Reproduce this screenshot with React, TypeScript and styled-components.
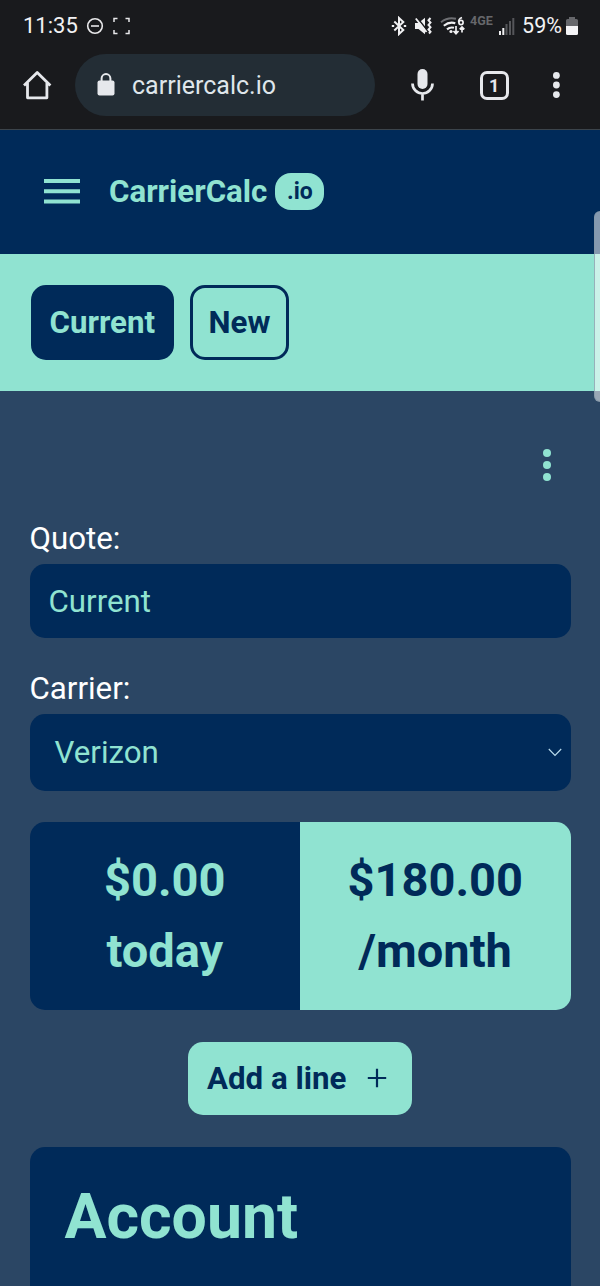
import React from "react";
import styled, { createGlobalStyle } from "styled-components";

const navy = "#002a59";
const mint = "#90e3d1";
const slate = "#2b4664";
const chrome = "#191a1d";
const light = "#e6e8ec";

const GlobalStyle = createGlobalStyle`
  * { box-sizing: border-box; }
  html, body { margin: 0; padding: 0; background: ${slate}; }
  body { font-family: Roboto, sans-serif; font-size: 31.25px; }
  button, input { font: inherit; margin: 0; border: 0; outline: 0; }
  svg { display: block; flex: none; }
`;

const Screen = styled.div`
  position: relative;
  width: 600px;
  height: 1286px;
  overflow: hidden;
  display: flex;
  flex-direction: column;
  background: ${slate};
`;

const BrowserChrome = styled.div`
  flex: none;
  height: 130px;
  background: ${chrome};
  border-bottom: 1px solid #3c444b;
`;

const StatusBar = styled.div`
  display: flex;
  align-items: center;
  justify-content: space-between;
  height: 50px;
  padding: 1px 22px 0 23px;
  color: #f2f2f4;
`;

const StatusGroup = styled.div<{ $gap: number }>`
  display: flex;
  align-items: center;
  gap: ${(p) => p.$gap}px;
`;

const StatusText = styled.span<{ $size?: number }>`
  font-size: ${(p) => p.$size ?? 22}px;
  line-height: 26px;
`;

const AddressRow = styled.div`
  display: flex;
  align-items: center;
  height: 70px;
  padding: 0 36px 0 22px;
`;

const AddressPill = styled.div`
  display: flex;
  align-items: center;
  width: 300px;
  height: 62px;
  margin-left: 23px;
  padding-left: 22px;
  border-radius: 31px;
  background: #232d35;
  color: #dfe6eb;
  font-size: 25px;
  gap: 17px;
`;

const BrowserActions = styled.div`
  display: flex;
  align-items: center;
  justify-content: space-between;
  width: 149px;
  margin-left: 36px;
`;

const TabCount = styled.div`
  display: flex;
  align-items: center;
  justify-content: center;
  width: 29px;
  height: 29px;
  margin-left: 1px;
  border: 3px solid ${light};
  border-radius: 7px;
  color: ${light};
  font-size: 18px;
  font-weight: 700;
  line-height: 23px;
`;

const SiteHeader = styled.header`
  flex: none;
  display: flex;
  align-items: center;
  height: 124px;
  padding: 0 0 1px 44px;
  background: ${navy};
  color: ${mint};
`;

const Brand = styled.div`
  display: flex;
  align-items: center;
  gap: 8px;
  margin-left: 29px;
  font-weight: 700;
`;

const BrandSuffix = styled.span`
  display: flex;
  align-items: center;
  justify-content: center;
  width: 49px;
  height: 37px;
  border-radius: 16px;
  background: ${mint};
  color: ${navy};
  font-size: 23px;
  line-height: 37px;
`;

const QuoteTabs = styled.nav`
  flex: none;
  display: flex;
  gap: 16px;
  height: 137px;
  padding: 31px 30.5px 0;
  background: ${mint};
`;

const QuoteTab = styled.button<{ $active?: boolean; $width: number }>`
  width: ${(p) => p.$width}px;
  height: 74.5px;
  padding: 0;
  border: 3px solid ${navy};
  border-radius: 15px;
  background: ${(p) => (p.$active ? navy : "transparent")};
  color: ${(p) => (p.$active ? mint : navy)};
  font-weight: 700;
`;

const Main = styled.main`
  flex: 1;
  display: flex;
  flex-direction: column;
  padding: 58px 29.5px 0;
`;

const MenuRow = styled.div`
  display: flex;
  justify-content: flex-end;
  padding-right: 20px;
  margin-bottom: 35px;
`;

const Label = styled.label`
  height: 48px;
  line-height: 46px;
  color: #fff;
`;

const TextField = styled.input`
  width: 100%;
  height: 74px;
  margin-bottom: 28px;
  padding: 0 19px;
  border-radius: 15px;
  background: ${navy};
  color: ${mint};
`;

const SelectField = styled.button`
  flex: none;
  display: flex;
  align-items: center;
  justify-content: space-between;
  width: 100%;
  height: 77px;
  padding: 0 8.5px 0 25px;
  border-radius: 15px;
  background: ${navy};
  color: ${mint};
`;

const Totals = styled.section`
  flex: none;
  display: flex;
  height: 187.5px;
  margin-top: 31px;
  border-radius: 15px;
  overflow: hidden;
`;

const Total = styled.div<{ $inverse?: boolean }>`
  flex: 1;
  padding-top: 23px;
  background: ${(p) => (p.$inverse ? mint : navy)};
  color: ${(p) => (p.$inverse ? navy : mint)};
  font-size: 47px;
  font-weight: 700;
  line-height: 70.5px;
  text-align: center;
`;

const AddLine = styled.button`
  flex: none;
  align-self: center;
  display: flex;
  align-items: center;
  gap: 21px;
  width: 224px;
  height: 73px;
  margin-top: 32px;
  padding: 0 0 0 19px;
  border-radius: 15px;
  background: ${mint};
  color: ${navy};
  font-weight: 700;
`;

const AccountCard = styled.section`
  flex: 1;
  margin-top: 32px;
  padding: 23px 35px;
  border-radius: 15px 15px 0 0;
  background: ${navy};
`;

const AccountTitle = styled.h1`
  margin: 0;
  color: ${mint};
  font-size: 62.5px;
  line-height: 94px;
`;

const ScrollThumb = styled.div`
  position: absolute;
  top: 211px;
  right: -6px;
  width: 12px;
  height: 191px;
  border-radius: 6px;
  border: 1px solid rgba(130, 150, 165, 0.7);
  background: rgba(255, 255, 255, 0.52);
`;

const Dots = ({ color, height, r }: { color: string; height: number; r: number }) => (
  <svg width={r * 2} height={height} fill={color}>
    <circle cx={r} cy={r} r={r} />
    <circle cx={r} cy={height / 2} r={r} />
    <circle cx={r} cy={height - r} r={r} />
  </svg>
);

const LeftStatusIcons = () => (
  <svg width="46" height="20" viewBox="0 0 46 20" fill="none" stroke="#e8e8ea">
    <circle cx="9" cy="10" r="7.3" strokeWidth="1.6" />
    <path d="M5 10h8" strokeWidth="1.6" />
    <path d="M28 6V2.500h3.500M39.500 2.500H43V6M43 14v3.500h-3.500M31.500 17.500H28V14" strokeWidth="1.500" />
  </svg>
);

const RightStatusIcons = () => (
  <svg width="74" height="20" viewBox="0 0 74 20" fill="none" stroke="#f0f0f2">
    <path d="M3.300 5.600l9 8.400-4.300 4V2l4.300 4-9 8.400M0.800 10h2.400M12.800 10h2.400" strokeWidth="2" />
    <path d="M24 7h3.500L34 1.800v16.400L27.500 13H24z" fill="#f0f0f2" stroke="none" />
    <path d="M25.800 1.300l11 14" stroke={chrome} strokeWidth="1.700" />
    <path d="M24.800 2.500L35.500 16" strokeWidth="1.900" />
    <path d="M39.500 2l-2 2.300 2 2.300-2 2.300 2 2.300-2 2.300 2 2.300-1.500 1.700" strokeWidth="2" />
    <path d="M50 6.200q7-5.500 15-3.400" stroke="#6d6e72" strokeWidth="2" />
    <path d="M52.800 9.800q5.500-4.600 11.500-2.600M56 13.400q3.200-2.800 7-1.600" strokeWidth="2.100" />
    <circle cx="60" cy="15.500" r="1.600" fill="#f0f0f2" stroke="none" />
    <path d="M71 1.500q-4 1.500-3.200 5" strokeWidth="1.700" />
    <circle cx="70" cy="6.500" r="2.100" strokeWidth="1.700" />
    <path d="M65 10v7M62.500 15l2.500 2.700 2.500-2.700M71 16.500v-5M68.700 13.300l2.300-2.400 2.300 2.400" strokeWidth="1.700" />
  </svg>
);

const NetworkLabel = styled.span`
  align-self: flex-start;
  width: 26px;
  margin: 1px -5px 0 -2.5px;
  color: #66676b;
  font-size: 12.5px;
  font-weight: 700;
  line-height: 14px;
`;

const SignalIcon = () => (
  <svg width="16" height="18" viewBox="0 0 16 18">
    <path d="M0 14h2v4H0zM3.300 11h2v7h-2z" fill="#f0f0f2" />
    <path d="M6.500 7h2v11h-2zM10 4h2v14h-2zM13.300 1h2v17h-2z" fill="#55565a" />
  </svg>
);

const BatteryIcon = () => (
  <svg width="12" height="18" viewBox="0 0 12 18">
    <path d="M3 2V0h6v2h1.500Q12 2 12 3.500V9H0V3.500Q0 2 1.500 2z" fill="#66676b" />
    <path d="M0 9h12v7.500q0 1.500-1.500 1.500h-9Q0 18 0 16.500z" fill="#f4f4f6" />
  </svg>
);

const BatteryStatus = styled.div`
  display: flex;
  align-items: center;
  gap: 4px;
`;

const HomeIcon = () => (
  <svg width="30" height="30" viewBox="0 0 30 30" fill="none" stroke={light} strokeWidth="2.800">
    <path d="M2 15.500L15.200 2.500 28.400 15.500M5.500 13v14.800h19.400V13" strokeLinejoin="round" />
  </svg>
);

const LockIcon = () => (
  <svg width="18" height="24" viewBox="0 0 18 24">
    <rect x="0.500" y="7.500" width="17" height="15" rx="2" fill={light} />
    <path d="M4.600 9V5.500a4.400 4.400 0 0 1 8.800 0V9" fill="none" stroke={light} strokeWidth="2" />
  </svg>
);

const MicIcon = () => (
  <svg width="23" height="32" viewBox="0 0 23 32">
    <rect x="6.500" y="0" width="10" height="20" rx="5" fill={light} />
    <path d="M1.500 14.500a10 10 0 0 0 20 0M11.500 24.500v7" fill="none" stroke={light} strokeWidth="2.700" />
  </svg>
);

const HamburgerIcon = () => (
  <svg width="36" height="25" viewBox="0 0 36 25" fill={mint}>
    <path d="M0 0h36v4H0zM0 10.200h36v4H0zM0 20.400h36v4H0z" />
  </svg>
);

const ChevronIcon = () => (
  <svg width="14" height="9" viewBox="0 0 14 9" fill="none" stroke="#b9dcec" strokeWidth="1.200">
    <path d="M0.800 1L7 7.300 13.200 1" />
  </svg>
);

const PlusIcon = () => (
  <svg width="20" height="20" viewBox="0 0 20 20" stroke={navy} strokeWidth="2.200">
    <path d="M0.800 10h18.400M10 0.800v18.400" />
  </svg>
);

export default function App() {
  return (
    <>
      <GlobalStyle />
      <Screen>
        <BrowserChrome>
          <StatusBar>
            <StatusGroup $gap={8}>
              <StatusText>11:35</StatusText>
              <LeftStatusIcons />
            </StatusGroup>
            <StatusGroup $gap={7.5}>
              <RightStatusIcons />
              <NetworkLabel>4GE</NetworkLabel>
              <SignalIcon />
              <BatteryStatus>
                <StatusText $size={21.5}>59%</StatusText>
                <BatteryIcon />
              </BatteryStatus>
            </StatusGroup>
          </StatusBar>
          <AddressRow>
            <HomeIcon />
            <AddressPill>
              <LockIcon />
              <span>carriercalc.io</span>
            </AddressPill>
            <BrowserActions>
              <MicIcon />
              <TabCount>1</TabCount>
              <Dots color={light} height={26} r={3.4} />
            </BrowserActions>
          </AddressRow>
        </BrowserChrome>
        <SiteHeader>
          <HamburgerIcon />
          <Brand>
            CarrierCalc
            <BrandSuffix>.io</BrandSuffix>
          </Brand>
        </SiteHeader>
        <QuoteTabs>
          <QuoteTab $active $width={143.5}>Current</QuoteTab>
          <QuoteTab $width={99}>New</QuoteTab>
        </QuoteTabs>
        <Main>
          <MenuRow>
            <Dots color={mint} height={32} r={4} />
          </MenuRow>
          <Label htmlFor="quote">Quote:</Label>
          <TextField id="quote" defaultValue="Current" />
          <Label>Carrier:</Label>
          <SelectField>
            <span>Verizon</span>
            <ChevronIcon />
          </SelectField>
          <Totals>
            <Total>
              <div>$0.00</div>
              <div>today</div>
            </Total>
            <Total $inverse>
              <div>$180.00</div>
              <div>/month</div>
            </Total>
          </Totals>
          <AddLine>
            Add a line
            <PlusIcon />
          </AddLine>
          <AccountCard>
            <AccountTitle>Account</AccountTitle>
          </AccountCard>
        </Main>
        <ScrollThumb />
      </Screen>
    </>
  );
}
